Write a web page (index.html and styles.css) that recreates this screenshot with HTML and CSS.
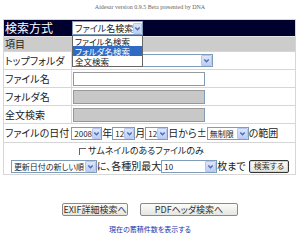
FILE: index.html
```html
<!DOCTYPE html>
<html lang="ja">
<head>
    <meta charset="UTF-8">
    <meta name="viewport" content="width=device-width, initial-scale=1.0">
    <title>Aidesar</title>
    <link rel="stylesheet" href="styles.css">
</head>
<body>
    <p class="version">Aidesar version 0.9.5 Beta presented by DNA</p>

    <div class="search">
        <div class="row head">
            <div class="label">検索方式</div>
            <div class="field">
                <div class="picker">
                    <span class="sel sel-mode">ファイル名検索<span class="arrow"><svg viewBox="0 0 8 8" width="7" height="7"><path d="M1.5 2.8 L4 5.3 L6.5 2.8" fill="none" stroke="#4d6aa8" stroke-width="1.6"/></svg></span></span>
                    <ul class="menu">
                        <li>ファイル名検索</li>
                        <li class="on">フォルダ名検索</li>
                        <li>全文検索</li>
                    </ul>
                </div>
            </div>
        </div>

        <div class="row sub">
            <div class="label">項目</div>
            <div class="field"></div>
        </div>

        <div class="row r-top">
            <div class="label">トップフォルダ</div>
            <div class="field">
                <span class="sel sel-folder"><span class="arrow"><svg viewBox="0 0 8 8" width="7" height="7"><path d="M1.5 2.8 L4 5.3 L6.5 2.8" fill="none" stroke="#4d6aa8" stroke-width="1.6"/></svg></span></span>
            </div>
        </div>

        <div class="row r-input">
            <div class="label">ファイル名</div>
            <div class="field"><span class="box"></span></div>
        </div>

        <div class="row r-input">
            <div class="label">フォルダ名</div>
            <div class="field"><span class="box off"></span></div>
        </div>

        <div class="row r-input">
            <div class="label">全文検索</div>
            <div class="field"><span class="box off"></span></div>
        </div>

        <div class="row r-date">
            <div class="line">
                <span class="date-label">ファイルの日付</span>
                <span class="sel sel-year">2008<span class="arrow"><svg viewBox="0 0 8 8" width="7" height="7"><path d="M1.5 2.8 L4 5.3 L6.5 2.8" fill="none" stroke="#4d6aa8" stroke-width="1.6"/></svg></span></span>年
                <span class="sel sel-day">12<span class="arrow"><svg viewBox="0 0 8 8" width="7" height="7"><path d="M1.5 2.8 L4 5.3 L6.5 2.8" fill="none" stroke="#4d6aa8" stroke-width="1.6"/></svg></span></span>月
                <span class="sel sel-day">12<span class="arrow"><svg viewBox="0 0 8 8" width="7" height="7"><path d="M1.5 2.8 L4 5.3 L6.5 2.8" fill="none" stroke="#4d6aa8" stroke-width="1.6"/></svg></span></span>日から±
                <span class="sel sel-range">無制限<span class="arrow"><svg viewBox="0 0 8 8" width="7" height="7"><path d="M1.5 2.8 L4 5.3 L6.5 2.8" fill="none" stroke="#4d6aa8" stroke-width="1.6"/></svg></span></span>の範囲
            </div>
        </div>

        <div class="row r-options">
            <div class="thumb"><span class="check"></span>サムネイルのあるファイルのみ</div>
            <div class="line center">
                <span class="sel sel-order">更新日付の新しい順<span class="arrow"><svg viewBox="0 0 8 8" width="7" height="7"><path d="M1.5 2.8 L4 5.3 L6.5 2.8" fill="none" stroke="#4d6aa8" stroke-width="1.6"/></svg></span></span>に、各種別最大
                <span class="sel sel-count">10<span class="arrow"><svg viewBox="0 0 8 8" width="7" height="7"><path d="M1.5 2.8 L4 5.3 L6.5 2.8" fill="none" stroke="#4d6aa8" stroke-width="1.6"/></svg></span></span>枚まで
                <span class="button default">検索する</span>
            </div>
        </div>
    </div>

    <div class="actions">
        <span class="button wide">EXIF詳細検索へ</span>
        <span class="button wide">PDFヘッダ検索へ</span>
    </div>

    <p class="count"><a href="#">現在の蓄積件数を表示する</a></p>
</body>
</html>
```

FILE: styles.css
```css
:root {
    --navy: #00002e;
    --row-gray: #cccccc;
    --line: #d6d6d6;
    --field-border: #7f9db9;
    --text-color: #222;
}

body {
    margin: 0;
    font-family: "Noto Sans CJK JP", sans-serif;
    font-feature-settings: "palt";
    color: var(--text-color);
    background: #fff;
}

.version {
    margin: 4px 0 0;
    text-align: center;
    font-family: "Liberation Serif", serif;
    font-size: 6px;
    line-height: 7px;
    color: #666;
}

.search {
    margin: 8px 0 0 3px;
    width: 291px;
    border: 1px solid var(--line);
    font-size: 10px;
    line-height: 12px;
}

.row {
    display: flex;
    border-top: 1px solid var(--line);
}

.row:first-child {
    border-top: 0;
}

.label {
    width: 66px;
    padding-left: 1px;
    border-right: 1px solid var(--line);
    display: flex;
    align-items: center;
    white-space: nowrap;
}

.field {
    flex: 1;
    display: flex;
    align-items: center;
    padding-left: 1px;
}

.head {
    height: 16px;
    background: var(--navy);
}

.head .label {
    color: #fff;
    font-size: 12px;
    border-right: 0;
}

.head .field {
    align-items: flex-start;
    padding-top: 1px;
}

.sub {
    height: 14px;
    background: var(--row-gray);
    border-top-color: #e4e4e4;
}

.sub .label {
    border-right: 0;
}

.r-top { height: 17px; }
.r-input { height: 17px; }
.r-date { height: 18px; }
.r-options { height: 31px; flex-direction: column; }

/* fake selects */
.sel {
    display: inline-flex;
    align-items: center;
    justify-content: space-between;
    box-sizing: border-box;
    height: 13px;
    padding-left: 2px;
    border: 1px solid var(--field-border);
    background: #fff;
    font-size: 8px;
    line-height: 11px;
    white-space: nowrap;
}

.arrow {
    display: flex;
    align-items: center;
    justify-content: center;
    width: 11px;
    height: 11px;
    box-sizing: border-box;
    border: 1px solid #b6c8f1;
    border-radius: 1px;
    background: linear-gradient(#dde6fb, #bccef6);
}

.sel-mode {
    width: 71px;
    height: 14px;
    font-size: 9px;
}

.sel-folder {
    width: 140px;
    justify-content: flex-end;
}

.sel-year { width: 31px; }
.sel-day { width: 23px; }
.sel-range { width: 42px; }
.sel-order { width: 86px; }
.sel-count { width: 56px; }

.picker {
    position: relative;
}

.menu {
    position: absolute;
    top: 14px;
    left: 0;
    z-index: 2;
    width: 69px;
    margin: 0;
    padding: 0;
    list-style: none;
    border: 1px solid #666;
    background: #fff;
    font-size: 8.5px;
    line-height: 10px;
    color: #222;
}

.menu li {
    height: 10px;
    padding-left: 2px;
    overflow: hidden;
}

.menu li.on {
    background: #316ac5;
    color: #fff;
}

/* text boxes */
.box {
    display: block;
    width: 132px;
    height: 14px;
    box-sizing: border-box;
    border: 1px solid var(--field-border);
    border-top-color: #999;
    border-left-color: #999;
    background: #fff;
}

.box.off {
    background: #c8c8c8;
}

.line {
    display: flex;
    align-items: center;
    height: 100%;
    padding-left: 1px;
    white-space: nowrap;
}

.date-label {
    margin-right: 2px;
}

.center {
    justify-content: center;
    height: 16px;
}

.thumb {
    display: flex;
    align-items: center;
    justify-content: center;
    height: 14px;
    padding-top: 1px;
    padding-right: 16px;
    font-size: 9px;
}

.check {
    width: 6px;
    height: 6px;
    margin-right: 2px;
    border-top: 1px solid #666;
    border-left: 1px solid #666;
}

/* buttons */
.button {
    display: inline-flex;
    align-items: center;
    justify-content: center;
    box-sizing: border-box;
    height: 13px;
    padding: 0 4px;
    border: 1px solid #8a8a8a;
    border-radius: 2px;
    background: linear-gradient(#fbfbf8, #e6e6e0);
    font-size: 8px;
    color: #333;
    white-space: nowrap;
}

.button.default {
    margin-left: 3px;
    border-color: #333;
    box-shadow: inset 0 0 0 1px #c9d6ee;
}

.actions {
    display: flex;
    justify-content: center;
    gap: 12px;
    margin-top: 28px;
}

.button.wide {
    height: 13px;
    font-size: 9px;
}

.actions .button:first-child { width: 66px; }
.actions .button:last-child { width: 98px; }

.count {
    margin: 9px 0 0;
    text-align: center;
    font-size: 7px;
    line-height: 8px;
}

.count a {
    color: #2233aa;
}
```
